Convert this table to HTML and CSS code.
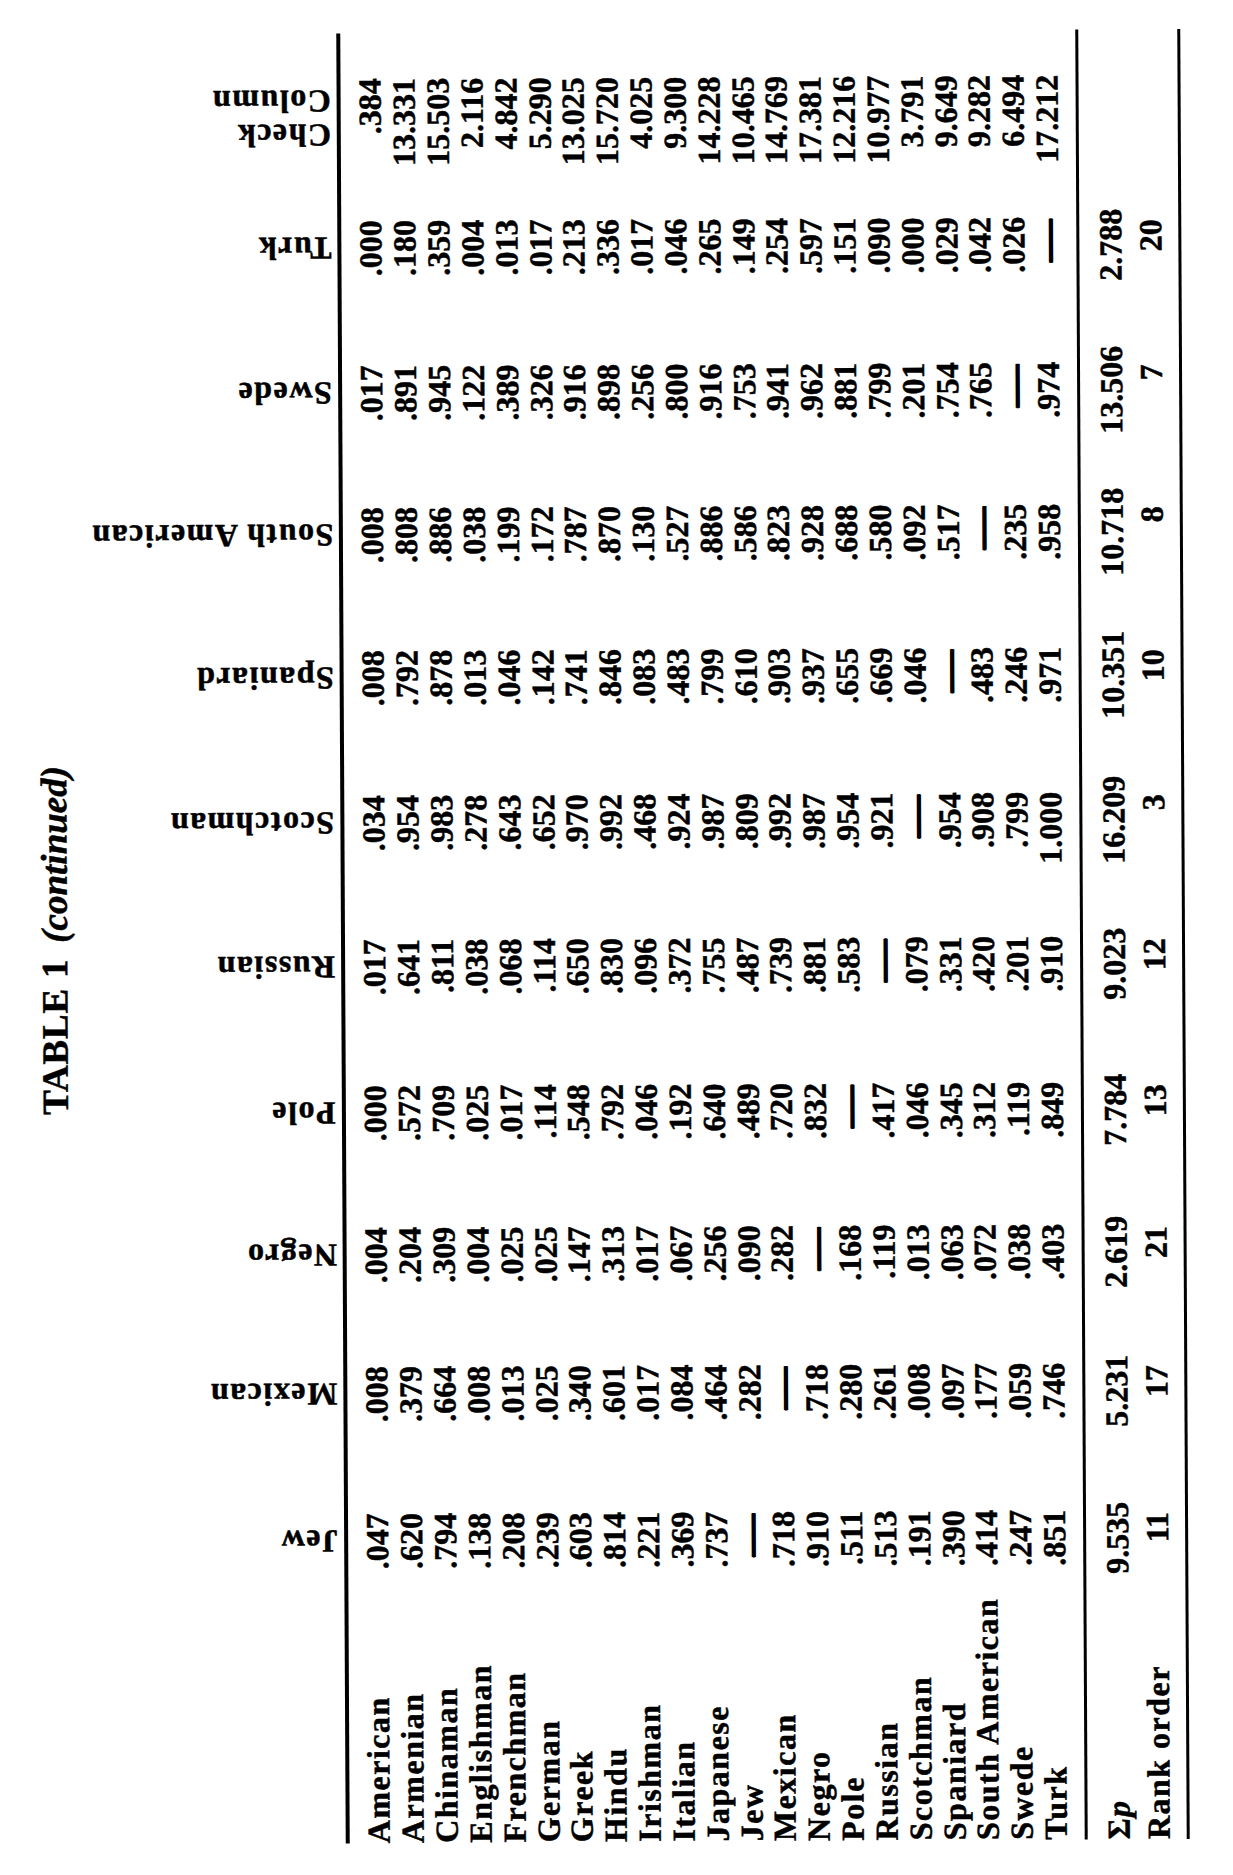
FILE: index.html
```html
<!DOCTYPE html>
<html lang="en">
<head>
<meta charset="utf-8">
<title>TABLE 1 (continued)</title>
<link rel="stylesheet" href="styles.css">
</head>
<body>
<div class="page">
  <div class="sheet">
    <div class="title">TABLE 1<i>(continued)</i></div>
    <div class="table">
      <div class="row head">
        <span></span>
        <div class="hc"><span class="vt">Jew</span></div>
        <div class="hc"><span class="vt">Mexican</span></div>
        <div class="hc"><span class="vt">Negro</span></div>
        <div class="hc"><span class="vt">Pole</span></div>
        <div class="hc"><span class="vt">Russian</span></div>
        <div class="hc"><span class="vt">Scotchman</span></div>
        <div class="hc"><span class="vt">Spaniard</span></div>
        <div class="hc"><span class="vt">South American</span></div>
        <div class="hc"><span class="vt">Swede</span></div>
        <div class="hc"><span class="vt">Turk</span></div>
        <div class="hc wide"><span class="vt vt2">Check<br>Column</span></div>
      </div>
      <div class="rule r1"></div>
      <div class="body">
        <div class="row"><span class="lb">American</span><span class="n">.047</span><span class="n">.008</span><span class="n">.004</span><span class="n">.000</span><span class="n">.017</span><span class="n">.034</span><span class="n">.008</span><span class="n">.008</span><span class="n">.017</span><span class="n">.000</span><span class="n">.384</span></div>
        <div class="row"><span class="lb">Armenian</span><span class="n">.620</span><span class="n">.379</span><span class="n">.204</span><span class="n">.572</span><span class="n">.641</span><span class="n">.954</span><span class="n">.792</span><span class="n">.808</span><span class="n">.891</span><span class="n">.180</span><span class="n">13.331</span></div>
        <div class="row"><span class="lb">Chinaman</span><span class="n">.794</span><span class="n">.664</span><span class="n">.309</span><span class="n">.709</span><span class="n">.811</span><span class="n">.983</span><span class="n">.878</span><span class="n">.886</span><span class="n">.945</span><span class="n">.359</span><span class="n">15.503</span></div>
        <div class="row"><span class="lb">Englishman</span><span class="n">.138</span><span class="n">.008</span><span class="n">.004</span><span class="n">.025</span><span class="n">.038</span><span class="n">.278</span><span class="n">.013</span><span class="n">.038</span><span class="n">.122</span><span class="n">.004</span><span class="n">2.116</span></div>
        <div class="row"><span class="lb">Frenchman</span><span class="n">.208</span><span class="n">.013</span><span class="n">.025</span><span class="n">.017</span><span class="n">.068</span><span class="n">.643</span><span class="n">.046</span><span class="n">.199</span><span class="n">.389</span><span class="n">.013</span><span class="n">4.842</span></div>
        <div class="row"><span class="lb">German</span><span class="n">.239</span><span class="n">.025</span><span class="n">.025</span><span class="n">.114</span><span class="n">.114</span><span class="n">.652</span><span class="n">.142</span><span class="n">.172</span><span class="n">.326</span><span class="n">.017</span><span class="n">5.290</span></div>
        <div class="row"><span class="lb">Greek</span><span class="n">.603</span><span class="n">.340</span><span class="n">.147</span><span class="n">.548</span><span class="n">.650</span><span class="n">.970</span><span class="n">.741</span><span class="n">.787</span><span class="n">.916</span><span class="n">.213</span><span class="n">13.025</span></div>
        <div class="row"><span class="lb">Hindu</span><span class="n">.814</span><span class="n">.601</span><span class="n">.313</span><span class="n">.792</span><span class="n">.830</span><span class="n">.992</span><span class="n">.846</span><span class="n">.870</span><span class="n">.898</span><span class="n">.336</span><span class="n">15.720</span></div>
        <div class="row"><span class="lb">Irishman</span><span class="n">.221</span><span class="n">.017</span><span class="n">.017</span><span class="n">.046</span><span class="n">.096</span><span class="n">.468</span><span class="n">.083</span><span class="n">.130</span><span class="n">.256</span><span class="n">.017</span><span class="n">4.025</span></div>
        <div class="row"><span class="lb">Italian</span><span class="n">.369</span><span class="n">.084</span><span class="n">.067</span><span class="n">.192</span><span class="n">.372</span><span class="n">.924</span><span class="n">.483</span><span class="n">.527</span><span class="n">.800</span><span class="n">.046</span><span class="n">9.300</span></div>
        <div class="row"><span class="lb">Japanese</span><span class="n">.737</span><span class="n">.464</span><span class="n">.256</span><span class="n">.640</span><span class="n">.755</span><span class="n">.987</span><span class="n">.799</span><span class="n">.886</span><span class="n">.916</span><span class="n">.265</span><span class="n">14.228</span></div>
        <div class="row"><span class="lb">Jew</span><span class="n"><span class="d">—</span></span><span class="n">.282</span><span class="n">.090</span><span class="n">.489</span><span class="n">.487</span><span class="n">.809</span><span class="n">.610</span><span class="n">.586</span><span class="n">.753</span><span class="n">.149</span><span class="n">10.465</span></div>
        <div class="row"><span class="lb">Mexican</span><span class="n">.718</span><span class="n"><span class="d">—</span></span><span class="n">.282</span><span class="n">.720</span><span class="n">.739</span><span class="n">.992</span><span class="n">.903</span><span class="n">.823</span><span class="n">.941</span><span class="n">.254</span><span class="n">14.769</span></div>
        <div class="row"><span class="lb">Negro</span><span class="n">.910</span><span class="n">.718</span><span class="n"><span class="d">—</span></span><span class="n">.832</span><span class="n">.881</span><span class="n">.987</span><span class="n">.937</span><span class="n">.928</span><span class="n">.962</span><span class="n">.597</span><span class="n">17.381</span></div>
        <div class="row"><span class="lb">Pole</span><span class="n">.511</span><span class="n">.280</span><span class="n">.168</span><span class="n"><span class="d">—</span></span><span class="n">.583</span><span class="n">.954</span><span class="n">.655</span><span class="n">.688</span><span class="n">.881</span><span class="n">.151</span><span class="n">12.216</span></div>
        <div class="row"><span class="lb">Russian</span><span class="n">.513</span><span class="n">.261</span><span class="n">.119</span><span class="n">.417</span><span class="n"><span class="d">—</span></span><span class="n">.921</span><span class="n">.669</span><span class="n">.580</span><span class="n">.799</span><span class="n">.090</span><span class="n">10.977</span></div>
        <div class="row"><span class="lb">Scotchman</span><span class="n">.191</span><span class="n">.008</span><span class="n">.013</span><span class="n">.046</span><span class="n">.079</span><span class="n"><span class="d">—</span></span><span class="n">.046</span><span class="n">.092</span><span class="n">.201</span><span class="n">.000</span><span class="n">3.791</span></div>
        <div class="row"><span class="lb">Spaniard</span><span class="n">.390</span><span class="n">.097</span><span class="n">.063</span><span class="n">.345</span><span class="n">.331</span><span class="n">.954</span><span class="n"><span class="d">—</span></span><span class="n">.517</span><span class="n">.754</span><span class="n">.029</span><span class="n">9.649</span></div>
        <div class="row"><span class="lb">South American</span><span class="n">.414</span><span class="n">.177</span><span class="n">.072</span><span class="n">.312</span><span class="n">.420</span><span class="n">.908</span><span class="n">.483</span><span class="n"><span class="d">—</span></span><span class="n">.765</span><span class="n">.042</span><span class="n">9.282</span></div>
        <div class="row"><span class="lb">Swede</span><span class="n">.247</span><span class="n">.059</span><span class="n">.038</span><span class="n">.119</span><span class="n">.201</span><span class="n">.799</span><span class="n">.246</span><span class="n">.235</span><span class="n"><span class="d">—</span></span><span class="n">.026</span><span class="n">6.494</span></div>
        <div class="row"><span class="lb">Turk</span><span class="n">.851</span><span class="n">.746</span><span class="n">.403</span><span class="n">.849</span><span class="n">.910</span><span class="n">1.000</span><span class="n">.971</span><span class="n">.958</span><span class="n">.974</span><span class="n"><span class="d">—</span></span><span class="n">17.212</span></div>
      </div>
      <div class="rule r2"></div>
      <div class="sums">
        <div class="row"><span class="lb">Σ<i>p</i></span><span class="s">9.535</span><span class="s">5.231</span><span class="s">2.619</span><span class="s">7.784</span><span class="s">9.023</span><span class="s">16.209</span><span class="s">10.351</span><span class="s">10.718</span><span class="s">13.506</span><span class="s">2.788</span></div>
        <div class="row"><span class="lb">Rank order</span><span class="rk">11</span><span class="rk">17</span><span class="rk">21</span><span class="rk">13</span><span class="rk">12</span><span class="rk">3</span><span class="rk">10</span><span class="rk">8</span><span class="rk">7</span><span class="rk">20</span></div>
      </div>
      <div class="rule r3"></div>
    </div>
  </div>
</div>
</body>
</html>
```

FILE: styles.css
```css
html, body {
  margin: 0;
  padding: 0;
  background: #fff;
}

.page {
  width: 1233px;
  height: 1875px;
  overflow: hidden;
  background: #fff;
}

/* the printed page is landscape; it is laid out upright and turned onto the portrait scan */
.sheet {
  width: 1875px;
  height: 1233px;
  box-sizing: border-box;
  padding-top: 35px;
  transform-origin: 0 0;
  transform: translate(616.5px, 937.5px) rotate(-90.3deg) translate(-937.5px, -616.5px);
  font-family: "Liberation Serif", "Times New Roman", serif;
  font-weight: 700;
  font-size: 32px;
  color: #000;
  -webkit-text-stroke: 0.5px #000;
}

.title {
  margin: 0;
  height: 40px;
  line-height: 40px;
  font-size: 37px;
  text-align: center;
  letter-spacing: 0.8px;
  white-space: nowrap;
}

.title i {
  margin-left: 16px;
  letter-spacing: 0;
}

.table {
  margin-left: 33px;
  width: 1810px;
}

.row {
  display: grid;
  grid-template-columns: 230px 100px 147px 139px 142px 146px 144px 145px 143px 142px 145px 142px 45px;
}

.head {
  height: 266px;
  box-sizing: border-box;
  padding-bottom: 6px;
  align-items: end;
}

.hc {
  justify-self: end;
  align-self: end;
  width: 57px;
  display: flex;
  justify-content: center;
}

.hc.wide {
  width: 80px;
}

.vt {
  writing-mode: vertical-rl;
  transform: rotate(180deg);
  line-height: 32px;
  white-space: nowrap;
  letter-spacing: 1.5px;
}

.vt2 {
  line-height: 34px;
}

.rule {
  background: #000;
}

.r1 {
  height: 4px;
}

.body {
  padding-top: 13.3px;
}

.body .row {
  height: 33.85px;
  line-height: 33.85px;
}

.r2 {
  height: 3px;
  margin-top: 11.35px;
}

.sums {
  padding-top: 10.7px;
}

.sums .row {
  height: 40px;
  line-height: 40px;
}

.r3 {
  height: 3px;
  margin-top: 8.3px;
}

.lb {
  white-space: nowrap;
  letter-spacing: 1.5px;
}

.n {
  text-align: right;
  white-space: nowrap;
}

.d {
  display: inline-block;
  margin-right: 8px;
  transform: scaleX(1.35);
  text-shadow: 0 1px 0 #000, 0 -1px 0 #000;
}

.s {
  justify-self: end;
  width: 57px;
  display: flex;
  justify-content: center;
  white-space: nowrap;
}

.rk {
  text-align: right;
  padding-right: 3px;
}
```
